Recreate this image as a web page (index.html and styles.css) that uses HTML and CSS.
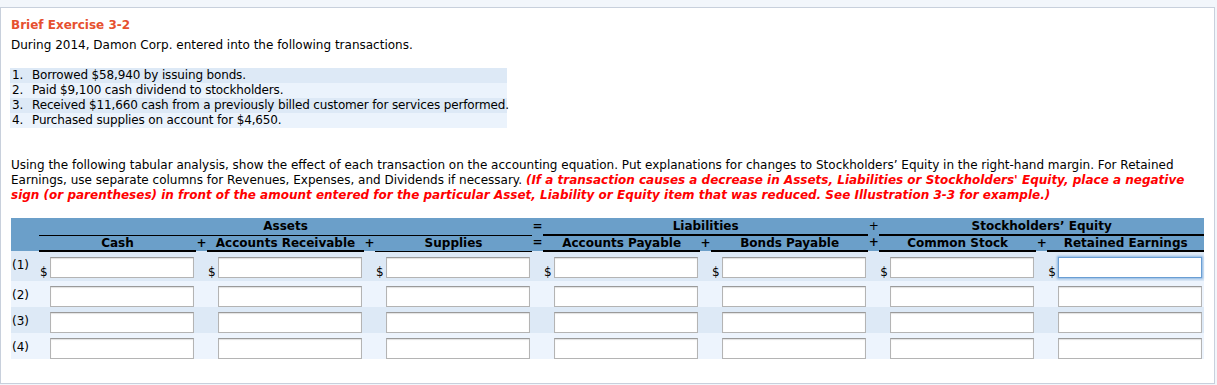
FILE: index.html
```html
<!DOCTYPE html>
<html>
<head>
<meta charset="utf-8">
<link rel="stylesheet" href="styles.css">
</head>
<body>
<div class="box">
  <h1 class="title">Brief Exercise 3-2</h1>
  <p class="intro">During 2014, Damon Corp. entered into the following transactions.</p>
  <ol class="tx">
    <li><span class="n">1.</span><span>Borrowed $58,940 by issuing bonds.</span></li>
    <li><span class="n">2.</span><span>Paid $9,100 cash dividend to stockholders.</span></li>
    <li><span class="n">3.</span><span>Received $11,660 cash from a previously billed customer for services performed.</span></li>
    <li><span class="n">4.</span><span>Purchased supplies on account for $4,650.</span></li>
  </ol>
  <p class="instr">Using the following tabular analysis, show the effect of each transaction on the accounting equation. Put explanations for changes to Stockholders’ Equity in the right-hand margin. For Retained Earnings, use separate columns for Revenues, Expenses, and Dividends if necessary. <em class="warn">(If a transaction causes a decrease in Assets, Liabilities or Stockholders' Equity, place a negative sign (or parentheses) in front of the amount entered for the particular Asset, Liability or Equity item that was reduced. See Illustration 3-3 for example.)</em></p>

  <table class="eq">
    <colgroup>
      <col class="c-lab">
      <col class="c-d"><col class="c-in"><col class="c-op">
      <col class="c-d"><col class="c-in"><col class="c-op">
      <col class="c-d"><col class="c-in"><col class="c-op">
      <col class="c-d"><col class="c-in"><col class="c-op">
      <col class="c-d"><col class="c-in"><col class="c-op">
      <col class="c-d"><col class="c-in"><col class="c-op">
      <col class="c-d"><col class="c-in">
    </colgroup>
    <thead>
      <tr class="h1">
        <th class="lab" rowspan="2"></th>
        <th colspan="8" class="grp thin">Assets</th>
        <th class="op">=</th>
        <th colspan="5" class="grp">Liabilities</th>
        <th class="op light">+</th>
        <th colspan="5" class="grp">Stockholders’ Equity</th>
      </tr>
      <tr class="h2">
        <th colspan="2" class="acc">Cash</th>
        <th class="op">+</th>
        <th colspan="2" class="acc">Accounts Receivable</th>
        <th class="op">+</th>
        <th colspan="2" class="acc thin">Supplies</th>
        <th class="op">=</th>
        <th colspan="2" class="acc">Accounts Payable</th>
        <th class="op">+</th>
        <th colspan="2" class="acc">Bonds Payable</th>
        <th class="op">+</th>
        <th colspan="2" class="acc">Common Stock</th>
        <th class="op">+</th>
        <th colspan="2" class="acc">Retained Earnings</th>
      </tr>
    </thead>
    <tbody>
      <tr class="r1">
        <td class="lab">(1)</td>
        <td class="d">$</td><td class="in"><input type="text"></td><td class="op"></td>
        <td class="d">$</td><td class="in"><input type="text"></td><td class="op"></td>
        <td class="d">$</td><td class="in"><input type="text"></td><td class="op"></td>
        <td class="d">$</td><td class="in"><input type="text"></td><td class="op"></td>
        <td class="d">$</td><td class="in"><input type="text"></td><td class="op"></td>
        <td class="d">$</td><td class="in"><input type="text"></td><td class="op"></td>
        <td class="d">$</td><td class="in"><input type="text" class="focus"></td>
      </tr>
      <tr class="r2">
        <td class="lab">(2)</td>
        <td class="d"></td><td class="in"><input type="text"></td><td class="op"></td>
        <td class="d"></td><td class="in"><input type="text"></td><td class="op"></td>
        <td class="d"></td><td class="in"><input type="text"></td><td class="op"></td>
        <td class="d"></td><td class="in"><input type="text"></td><td class="op"></td>
        <td class="d"></td><td class="in"><input type="text"></td><td class="op"></td>
        <td class="d"></td><td class="in"><input type="text"></td><td class="op"></td>
        <td class="d"></td><td class="in"><input type="text"></td>
      </tr>
      <tr class="r1 rn">
        <td class="lab">(3)</td>
        <td class="d"></td><td class="in"><input type="text"></td><td class="op"></td>
        <td class="d"></td><td class="in"><input type="text"></td><td class="op"></td>
        <td class="d"></td><td class="in"><input type="text"></td><td class="op"></td>
        <td class="d"></td><td class="in"><input type="text"></td><td class="op"></td>
        <td class="d"></td><td class="in"><input type="text"></td><td class="op"></td>
        <td class="d"></td><td class="in"><input type="text"></td><td class="op"></td>
        <td class="d"></td><td class="in"><input type="text"></td>
      </tr>
      <tr class="r2">
        <td class="lab">(4)</td>
        <td class="d"></td><td class="in"><input type="text"></td><td class="op"></td>
        <td class="d"></td><td class="in"><input type="text"></td><td class="op"></td>
        <td class="d"></td><td class="in"><input type="text"></td><td class="op"></td>
        <td class="d"></td><td class="in"><input type="text"></td><td class="op"></td>
        <td class="d"></td><td class="in"><input type="text"></td><td class="op"></td>
        <td class="d"></td><td class="in"><input type="text"></td><td class="op"></td>
        <td class="d"></td><td class="in"><input type="text"></td>
      </tr>
    </tbody>
  </table>
</div>
</body>
</html>
```

FILE: styles.css
```css
html, body {
  margin: 0;
  padding: 0;
  background: #f2f6fb;
}
body {
  font-family: "DejaVu Sans", Verdana, sans-serif;
  font-size: 12px;
  line-height: 15px;
  color: #000;
}
.box {
  margin-top: 7px;
  width: 1215px;
  box-sizing: border-box;
  background: #fff;
  border: 1px solid #c8d0dc;
  padding: 10px 10px 24px 10px;
}
.title {
  margin: 0;
  font-size: 12px;
  line-height: 15px;
  font-weight: bold;
  color: #e6502f;
}
.intro {
  margin: 5px 0 0;
}
.tx {
  list-style: none;
  margin: 15px 0 0 -1px;
  padding: 0;
  width: 497px;
}
.tx li {
  display: flex;
  padding-left: 2px;
  height: 15px;
  white-space: nowrap;
  letter-spacing: -0.15px;
  background: #dde9f6;
}
.tx li:nth-child(even) {
  background: #ebf3fc;
}
.tx .n {
  width: 20px;
  flex: none;
}
.instr {
  margin: 30px 0 0;
}
.warn {
  color: #f00;
  font-weight: bold;
  font-style: italic;
}
.eq {
  margin-top: 15px;
  border-collapse: collapse;
  table-layout: fixed;
  width: 1193px;
}
.c-lab { width: 28px; }
.c-d { width: 11px; }
.c-in { width: 146px; }
.c-op { width: 11px; }
.eq th {
  padding: 0;
  font-weight: bold;
  font-size: 12px;
  background: #6b9fc9;
  color: #000;
  text-align: center;
  white-space: nowrap;
}
.h1 th {
  height: 15px;
  line-height: 15px;
  vertical-align: top;
  padding-top: 1px;
}
.h1 .grp {
  border-bottom: 2px solid #000;
}
.h1 .grp.thin {
  border-bottom-width: 1px;
}
.h1 .light {
  font-weight: normal;
}
.h2 th {
  height: 13px;
  line-height: 14px;
  vertical-align: top;
  padding-top: 0;
}
.h2 .acc {
  border-bottom: 2px solid #000;
}
.h2 .acc.thin {
  border-bottom-width: 1px;
}
.eq td {
  padding: 0;
  vertical-align: top;
}
.r1 td { background: #dde9f6; }
.r2 td { background: #edf4fd; }
.eq td.lab {
  padding: 7px 0 0 1px;
  line-height: 15px;
}
.eq td.in {
  padding-top: 5px;
}
.r1 td.in { padding-bottom: 3px; }
.r1.rn td.in { padding-bottom: 0; }
.eq td.d {
  vertical-align: bottom;
  padding: 0 0 1px 1px;
  line-height: 15px;
  font-size: 12px;
}
.eq input {
  display: block;
  box-sizing: border-box;
  width: 144px;
  height: 21px;
  margin: 0;
  border: 1px solid #b4b4b4;
  border-top-color: #9a9a9a;
  box-shadow: inset 0 1px 1px rgba(0,0,0,0.12);
  background: #fff;
  padding: 0 3px;
  font-family: inherit;
  font-size: 12px;
}
.eq input.focus {
  border: 1px solid #6a9ed3;
  box-shadow: 0 0 2px 1px #8db7e3;
  outline: none;
}
```
